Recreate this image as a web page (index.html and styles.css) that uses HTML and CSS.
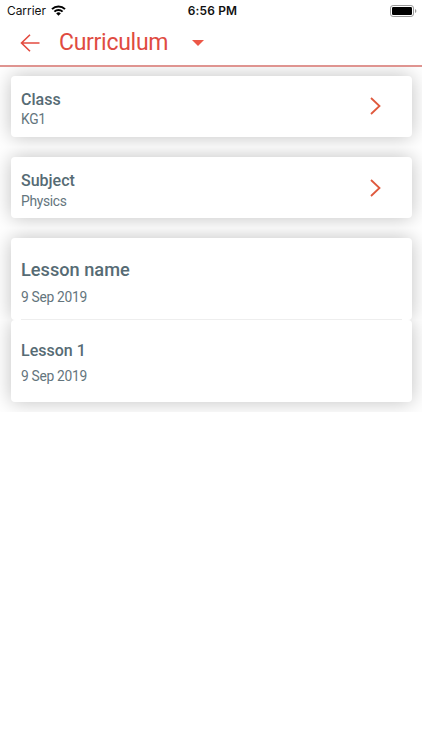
FILE: index.html
```html
<!DOCTYPE html>
<html lang="en">
<head>
<meta charset="utf-8">
<title>Curriculum</title>
<link rel="stylesheet" href="styles.css">
</head>
<body>
<div class="status">
  <div class="carrier"><span>Carrier</span>
    <svg width="15" height="11" viewBox="0 0 15 11" fill="none" stroke="#000" stroke-width="2"><path d="M1 4.1a9.2 9.2 0 0 1 13 0M3.4 6.6a5.8 5.8 0 0 1 8.2 0"/><path d="M5.2 8.4a3.3 3.3 0 0 1 4.6 0L7.5 10.7z" fill="#000" stroke="none"/></svg>
  </div>
  <span class="time">6:56 PM</span>
  <svg class="battery" width="27" height="12" viewBox="0 0 27 12"><rect x=".5" y=".5" width="23" height="11" rx="2.6" fill="#fff" stroke="#999"/><rect x="2" y="2" width="20" height="8" rx="1.2"/><path d="M25 4v4q1.4-.6 1.4-2T25 4z" fill="#999"/></svg>
</div>
<header class="header">
  <svg class="back" width="20" height="18" viewBox="0 0 20 18" fill="none" stroke="#e34b40" stroke-width="1.6"><path d="M19.500 9H1.500M10 .7L1.500 9l8.500 8.300"/></svg>
  <h1 class="title">Curriculum</h1>
  <svg class="caret" width="12" height="6" viewBox="0 0 12 6"><path d="M0 0h12L6 6z" fill="#ec5747"/></svg>
</header>
<main>
  <section class="row class">
    <div class="card picker">
      <div class="choice"><h2 class="label">Class</h2><p class="value">KG1</p></div>
      <svg class="chevron" width="12" height="18" viewBox="0 0 12 18"><path d="M1 1l8.500 8L1 17"/></svg>
    </div>
  </section>
  <section class="row subject">
    <div class="card picker">
      <div class="choice"><h2 class="label">Subject</h2><p class="value">Physics</p></div>
      <svg class="chevron" width="12" height="18" viewBox="0 0 12 18"><path d="M1 1l8.500 8L1 17"/></svg>
    </div>
  </section>
  <section class="row lesson first">
    <div class="card"><h2 class="label heading">Lesson name</h2><p class="value">9 Sep 2019</p><hr class="divider"></div>
  </section>
  <section class="row lesson last">
    <div class="card"><h2 class="label">Lesson 1</h2><p class="value">9 Sep 2019</p></div>
  </section>
</main>
</body>
</html>
```
FILE: styles.css
```css
* { box-sizing: border-box; }
body { margin: 0; background: #fff; font-family: Roboto, sans-serif; color: #566b74; }
h1, h2, p { margin: 0; }
svg { display: block; flex: none; }

.status {
  height: 21px;
  display: grid;
  grid-template-columns: 1fr auto 1fr;
  align-items: center;
  padding: 0 5px 0 7px;
  font-family: Inter, sans-serif;
  font-size: 11.9px;
  color: #111;
}
.carrier { display: flex; align-items: center; gap: 5px; }
.time { font-weight: 600; letter-spacing: .2px; margin-left: 1px; }
.battery { justify-self: end; }

.header {
  height: 46px;
  display: flex;
  align-items: center;
  padding: 0 20px 3px;
  border-bottom: 2px solid #df9490;
}
.back { margin-top: 2px; }
.title { margin-left: 19px; margin-top: 2px; width: 109px; font-size: 23px; letter-spacing: -.28px; line-height: 28px; font-weight: 400; color: #df4b41; }
.caret { margin-left: 24px; margin-top: 2px; }

/* Each list row clips the shadow of its own card. */
.row { height: 80px; padding: 9px 10.5px 10px; overflow: hidden; }
.subject { height: 81px; padding-top: 10px; }
.card {
  height: 100%;
  background: #fff;
  border-radius: 4px;
  box-shadow: 0 0 20px rgba(0, 0, 0, .25);
  padding: 0 9.5px 0 10.5px;
}
.picker { display: flex; align-items: center; justify-content: space-between; padding-right: 30px; }
.choice { padding-top: 6px; }
.label { font-size: 16px; line-height: 20px; font-weight: 500; }
.value { font-size: 13.800px; letter-spacing: -.3px; line-height: 20px; color: #64757d; }
.class .value { margin-top: -1px; margin-bottom: 1px; }
.chevron { fill: none; stroke: #df593d; stroke-width: 1.8; }
.class .chevron { margin-bottom: 1px; }

.lesson { height: 92px; }
.first { padding-top: 10px; padding-bottom: 0; }
.last { padding-top: 0; }
.first .card { padding-top: 21px; }
.last .card { padding-top: 21px; }
.heading { font-size: 18.200px; line-height: 22px; }
.first .value { margin-top: 6px; }
.last .value { margin-top: 5px; }
.divider { height: 1px; margin: 12px 0 0; border: 0; background: #eee; }
```
